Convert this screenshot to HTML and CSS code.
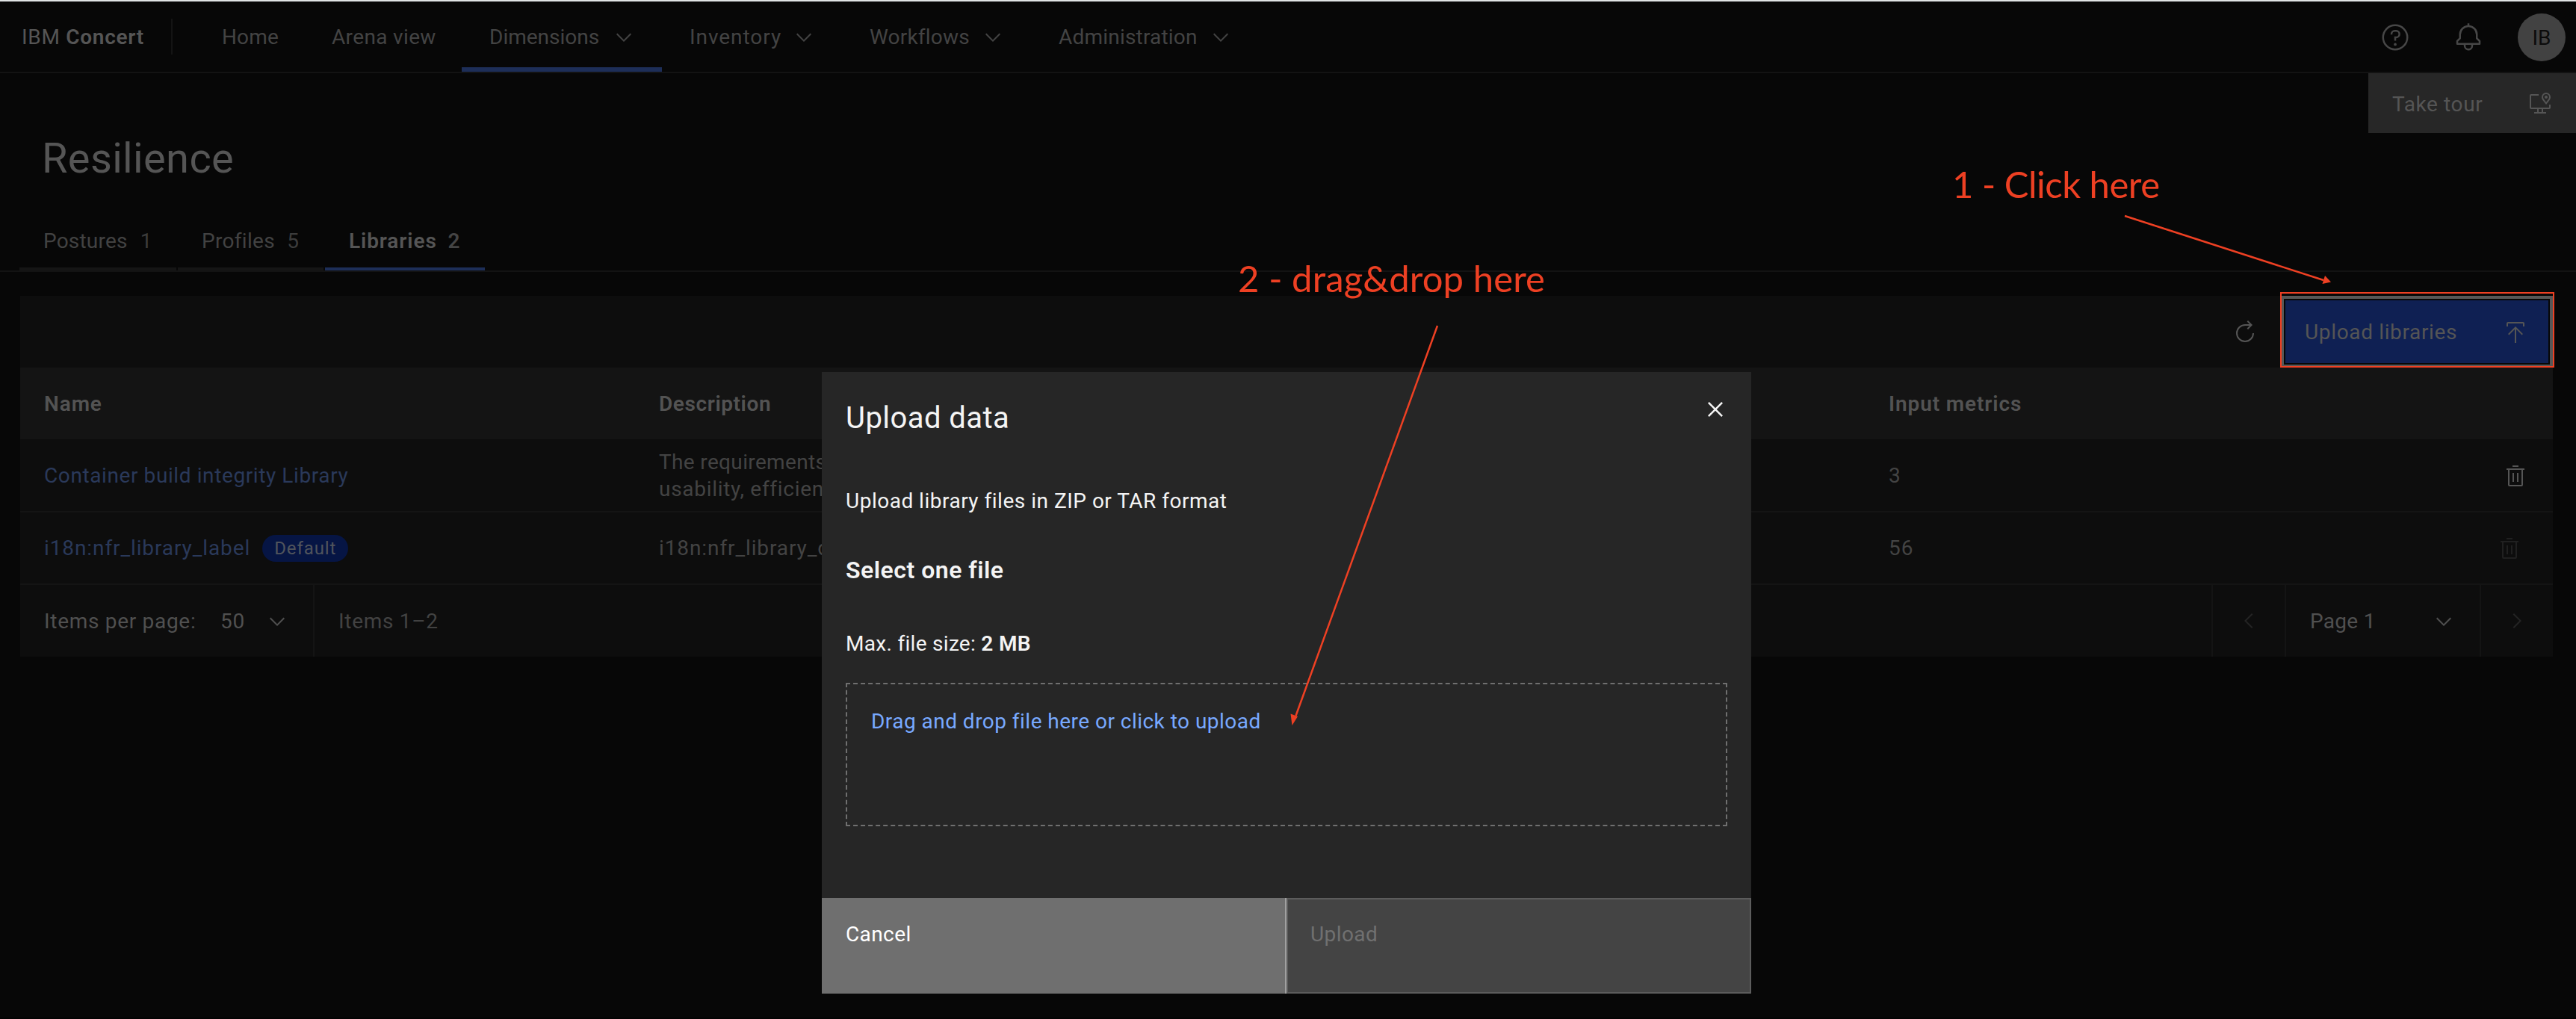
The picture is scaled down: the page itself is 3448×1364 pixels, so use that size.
FILE: index.html
```html
<!DOCTYPE html>
<html lang="en">
<head>
<meta charset="utf-8">
<title>IBM Concert - Resilience</title>
<link rel="stylesheet" href="styles.css">
</head>
<body>
<svg class="defs" aria-hidden="true">
  <symbol id="chev" viewBox="0 0 16 16"><path d="M8 11L3 6l.7-.7L8 9.6l4.3-4.3.7.7z"/></symbol>
  <symbol id="trash" viewBox="0 0 32 32"><path d="M12 12h2v12h-2zM18 12h2v12h-2zM12 2h8v2h-8z"/><path fill-rule="evenodd" d="M4 6v2h2v20a2 2 0 0 0 2 2h16a2 2 0 0 0 2-2V8h2V6zM8 28V8h16v20z"/></symbol>
</svg>
<div class="page">
  <header class="topbar">
    <div class="brand">IBM <b>Concert</b></div>
    <nav class="nav">
      <a class="nav-item home">Home</a>
      <a class="nav-item arena">Arena view</a>
      <a class="nav-item dimensions active">Dimensions <svg class="i32"><use href="#chev"/></svg></a>
      <a class="nav-item inventory">Inventory <svg class="i32"><use href="#chev"/></svg></a>
      <a class="nav-item workflows">Workflows <svg class="i32"><use href="#chev"/></svg></a>
      <a class="nav-item admin">Administration <svg class="i32"><use href="#chev"/></svg></a>
    </nav>
    <div class="tools">
      <svg class="i40" viewBox="0 0 32 32"><path d="M16,2A14,14,0,1,0,30,16,14,14,0,0,0,16,2Zm0,26A12,12,0,1,1,28,16,12,12,0,0,1,16,28Z"/><circle cx="16" cy="23.5" r="1.5"/><path d="M17 8h-1.5A4.49 4.49 0 0 0 11 12.5V13h2v-.5A2.5 2.5 0 0 1 15.5 10H17a2.5 2.5 0 0 1 0 5H15v4.5h2V17a4.5 4.5 0 0 0 0-9z"/></svg>
      <svg class="i40" viewBox="0 0 32 32"><path d="M28.7071,19.293,26,16.5859V13a10.0136,10.0136,0,0,0-9-9.9492V1H15V3.0508A10.0136,10.0136,0,0,0,6,13v3.5859L3.2929,19.293A1,1,0,0,0,3,20v3a1,1,0,0,0,1,1h7v.7768a5.152,5.152,0,0,0,4.5,5.1987A5.0057,5.0057,0,0,0,21,25V24h7a1,1,0,0,0,1-1V20A1,1,0,0,0,28.7071,19.293ZM19,25a3,3,0,0,1-6,0V24h6Zm8-3H5V20.4141L7.707,17.707A1,1,0,0,0,8,17V13a8,8,0,0,1,16,0v4a1,1,0,0,0,.293.707L27,20.4141Z"/></svg>
      <span class="avatar">IB</span>
    </div>
  </header>

  <section class="heading">
    <h1>Resilience</h1>
    <button class="tour">Take tour
      <svg class="i32" viewBox="0 0 32 32"><path fill-rule="evenodd" d="M28 18v4H4V6h10V4H4a2 2 0 0 0-2 2v16a2 2 0 0 0 2 2h8v4H8v2h16v-2h-4v-4h8a2 2 0 0 0 2-2v-4zM18 28h-4v-4h4z"/><path fill-rule="evenodd" d="M24 18l-4.3-5.6C18.6 11 18 9.6 18 8a6 6 0 0 1 12 0c0 1.6-.6 3-1.7 4.4zM24 4a4 4 0 0 0-4 4c0 1.1.4 2 1.2 3.1l2.8 3.6 2.8-3.6C27.6 10 28 9.1 28 8a4 4 0 0 0-4-4z"/><circle cx="24" cy="8" r="2"/></svg>
    </button>
  </section>
  <div class="tabs">
    <a class="tab postures">Postures <span>1</span></a>
    <a class="tab profiles">Profiles <span>5</span></a>
    <a class="tab libraries active">Libraries <span>2</span></a>
  </div>

  <main class="card">
    <div class="toolbar">
      <svg class="i32" viewBox="0 0 32 32"><path d="M26,18A10,10,0,1,1,16,8h6.1822l-3.5844,3.5854L20,13l6-6L20,1,18.5978,2.414,22.1851,6H16A12,12,0,1,0,28,18Z"/></svg>
      <button class="upload-btn">Upload libraries
        <svg class="i32" viewBox="0 0 32 32"><path d="M6 18l1.41 1.41L15 11.83V30h2V11.83l7.59 7.58L26 18 16 8zM6 8V4h20v4h2V4a2 2 0 0 0-2-2H6a2 2 0 0 0-2 2v4z"/></svg>
      </button>
    </div>
    <div class="row head"><span class="name">Name</span><span class="desc">Description</span><span class="inputs">Input metrics</span></div>
    <div class="row first">
      <span><a class="link container">Container build integrity Library</a></span>
      <span class="cell"><span class="line1">The requirements</span><br><span class="line2">usability, efficiency</span></span>
      <span class="cell">3</span>
      <svg class="i32 bin"><use href="#trash"/></svg>
    </div>
    <div class="row second">
      <span class="with-tag"><a class="link">i18n:nfr_library_label</a><span class="tag">Default</span></span>
      <span class="cell wide">i18n:nfr_library_desc</span>
      <span class="cell">56</span>
      <svg class="i32 bin off"><use href="#trash"/></svg>
    </div>
    <footer class="pager">
      <div class="per-page"><span class="label">Items per page:</span><span class="count">50</span><svg class="i32"><use href="#chev"/></svg></div>
      <div class="range">Items 1–2</div>
      <div class="step"><svg class="i32" viewBox="0 0 16 16"><path d="M5 8l5-5 .7.7L6.4 8l4.3 4.3-.7.7z"/></svg></div>
      <div class="page-select">Page 1 <svg class="i32"><use href="#chev"/></svg></div>
      <div class="step"><svg class="i32" viewBox="0 0 16 16"><path d="M11 8l-5 5-.7-.7L9.6 8 5.3 3.7 6 3z"/></svg></div>
    </footer>
  </main>
</div>

<div class="modal" role="dialog">
  <div class="modal-head">
    <h2>Upload data</h2>
    <svg class="i40" viewBox="0 0 32 32"><path d="M17.4141 16L24 9.4141 22.5859 8 16 14.5859 9.4143 8 8 9.4141 14.5859 16 8 22.5859 9.4143 24 16 17.4141 22.5859 24 24 22.5859z"/></svg>
  </div>
  <div class="modal-body">
    <p class="intro">Upload library files in ZIP or TAR format</p>
    <h3>Select one file</h3>
    <p class="limit">Max. file size: <b>2 MB</b></p>
    <div class="dropzone">Drag and drop file here or click to upload</div>
  </div>
  <div class="modal-actions">
    <button class="cancel">Cancel</button>
    <button class="submit" disabled>Upload</button>
  </div>
</div>

<div class="highlight"></div>
<svg class="arrows" viewBox="0 0 3448 1364">
  <path class="shaft" d="M2844 289L3110 375M1924 436L1734.500 958"/>
  <path d="M3120 377.500l-11.500 2.500 3.500-11zM1729.500 971l-2-15.500 9.500 3.500z"/>
</svg>
<div class="note click">1 - Click here</div>
<div class="note drop">2 - drag&amp;drop here</div>
</body>
</html>
```
FILE: styles.css
```css
* { box-sizing: border-box; }
body {
  margin: 0; width: 3448px; height: 1364px; overflow: hidden; position: relative;
  background: #070707; color: #434343;
  font: 400 28px/36px Roboto, "Liberation Sans", sans-serif;
}
h1, h2, h3, p { margin: 0; font-weight: 400; }
button { font: inherit; border: 0; border-radius: 0; margin: 0; text-align: left; }
svg { fill: currentColor; flex: none; display: block; }
.defs { position: absolute; width: 0; height: 0; }
.i32 { width: 32px; height: 32px; }
.i40 { width: 40px; height: 40px; }
b { font-weight: 600; }

.page { border-top: 2px solid #e0e3e4; border-bottom: 2px solid #030303; height: 1364px; }
.topbar { display: flex; height: 96px; border-bottom: 2px solid #131313; }
.brand {
  width: 231px; height: 48px; margin-top: 23px; padding-left: 29px;
  border-right: 2px solid #141414; line-height: 50px; color: #555; letter-spacing: .7px; white-space: nowrap;
}
.nav { display: flex; margin-left: 29px; }
.nav-item { display: flex; align-items: center; justify-content: space-between; padding: 2px 35px 0 37px; white-space: nowrap; }
.nav-item.active { border-bottom: 6px solid #1d2e58; padding-top: 8px; }
.home { width: 147px; letter-spacing: .15px; }
.arena { width: 211px; letter-spacing: .35px; }
.dimensions { width: 268px; }
.inventory { width: 241px; letter-spacing: .95px; }
.workflows { width: 253px; letter-spacing: .2px; }
.admin { width: 305px; letter-spacing: .2px; }
.tools { display: flex; align-items: center; margin-left: auto; padding: 2px 14px 0 0; color: #474747; }
.tools .i40 { margin-right: 58px; }
.tools .i40 + .i40 { margin-right: 46px; }
.avatar { width: 64px; height: 64px; border-radius: 50%; background: #424242; color: #0c0c0c; line-height: 65px; text-align: center; }

.heading { display: flex; justify-content: space-between; height: 190px; padding-left: 56px; }
h1 { font-size: 56px; line-height: 64px; margin-top: 82px; color: #555; letter-spacing: .35px; }
.tour {
  display: flex; justify-content: space-between; align-items: flex-start; width: 278px; height: 80px;
  padding: 24px 32px 0 32px; background: #272727; color: #555; letter-spacing: .6px;
}
.tabs { display: flex; gap: 2px; height: 76px; padding: 0 0 0 26px; border-bottom: 2px solid #131313; }
.tab { height: 74px; padding: 17px 0 0 32px; border-bottom: 4px solid #151515; white-space: nowrap; color: #424242; }
.tab span { color: #3c3c3c; }
.postures { width: 210px; letter-spacing: .2px; }
.postures span { margin-left: 10px; }
.profiles { width: 195px; letter-spacing: .3px; }
.profiles span { margin-left: 9px; }
.libraries { width: 214px; letter-spacing: .9px; }
.libraries span { margin-left: 7px; }
.tab.active { border-color: #1d2e58; color: #555; font-weight: 600; }
.tab.active span { color: #444; }

.card { margin: 32px 31px 0 27px; background: #0d0d0d; }
.toolbar { height: 96px; display: flex; justify-content: flex-end; align-items: center; gap: 33px; color: #555; }
.upload-btn {
  display: flex; justify-content: space-between; align-items: center; width: 363px; height: 96px;
  padding: 1px 30px 0 28px; background: #0f2053; color: #555; letter-spacing: .65px; white-space: nowrap;
  border: solid #575757; border-width: 4px 4px 4px 3px; box-shadow: inset 0 0 0 2px #070707;
}
.row { display: grid; grid-template-columns: 823px 1646px 800px 1fr; align-items: center; padding: 2px 0 0 32px; height: 98px; border-bottom: 2px solid #141414; }
.row.head { height: 96px; border: 0; background: #141414; color: #535353; font-weight: 600; letter-spacing: .9px; }
.head .desc { letter-spacing: .6px; }
.row.second { height: 97px; padding-top: 0; letter-spacing: .9px; }
.cell { color: #434343; }
.line1 { letter-spacing: .35px; }
.line2 { letter-spacing: .7px; }
.link { color: #2a395a; }
.container { letter-spacing: .6px; }
.bin { color: #555; margin-left: 23px; }
.bin.off { color: #202020; margin-left: 15px; }
.with-tag { display: flex; align-items: center; }
.tag { width: 115px; height: 36px; margin-left: 16px; border-radius: 18px; background: #061544; color: #50545c; font-size: 24px; text-align: center; letter-spacing: .9px; }
.pager { display: flex; height: 96px; align-items: stretch; color: #505050; letter-spacing: .7px; }
.per-page { display: flex; align-items: center; width: 394px; padding: 1px 0 0 32px; border-right: 2px solid #141414; }
.label { width: 236px; }
.count { width: 60px; }
.range { margin-right: auto; padding-left: 32px; line-height: 98px; color: #424242; }
.step { display: flex; align-items: center; justify-content: center; width: 98px; border-left: 2px solid #141414; color: #242424; }
.page-select { display: flex; align-items: center; justify-content: space-between; width: 261px; padding: 1px 32px 0 32px; border-left: 2px solid #141414; letter-spacing: .3px; }

.modal { position: absolute; left: 1100px; top: 498px; width: 1244px; height: 832px; display: flex; flex-direction: column; background: #262626; color: #f4f4f4; }
.modal-head { display: flex; justify-content: space-between; height: 132px; padding: 30px 28px 0 32px; }
h2 { font-size: 40px; line-height: 64px; letter-spacing: .45px; }
.modal-body { flex: 1; padding: 23px 32px 0; }
.intro { letter-spacing: .5px; }
h3 { font-size: 32px; line-height: 40px; font-weight: 600; margin-top: 54px; letter-spacing: .5px; }
.limit { margin-top: 61px; letter-spacing: .3px; }
.dropzone { height: 192px; margin-top: 34px; padding: 32px; border: 2px dashed #6f6f6f; color: #78a9ff; letter-spacing: .47px; }
.modal-actions { display: flex; height: 128px; }
.modal-actions button { display: block; width: 622px; padding: 31px 32px 61px 32px; letter-spacing: .4px; }
.cancel { background: #6f6f6f; color: #fff; border-right: 2px solid #a0a0a0; }
.submit { background: #444; color: #707070; box-shadow: inset 0 0 0 2px #5c5c5c; }

.highlight { position: absolute; left: 3052px; top: 391px; width: 367px; height: 101px; border: 2px solid #ee4023; }
.arrows { position: absolute; left: 0; top: 0; width: 3448px; height: 1364px; fill: #ee4023; }
.shaft { fill: none; stroke: #ee4023; stroke-width: 2.5; }
.note { position: absolute; color: #ee4023; font: 400 49px/60px Lato, sans-serif; white-space: nowrap; }
.click { left: 2613px; top: 216px; letter-spacing: -.5px; }
.drop { left: 1657px; top: 342px; letter-spacing: .1px; }
```
